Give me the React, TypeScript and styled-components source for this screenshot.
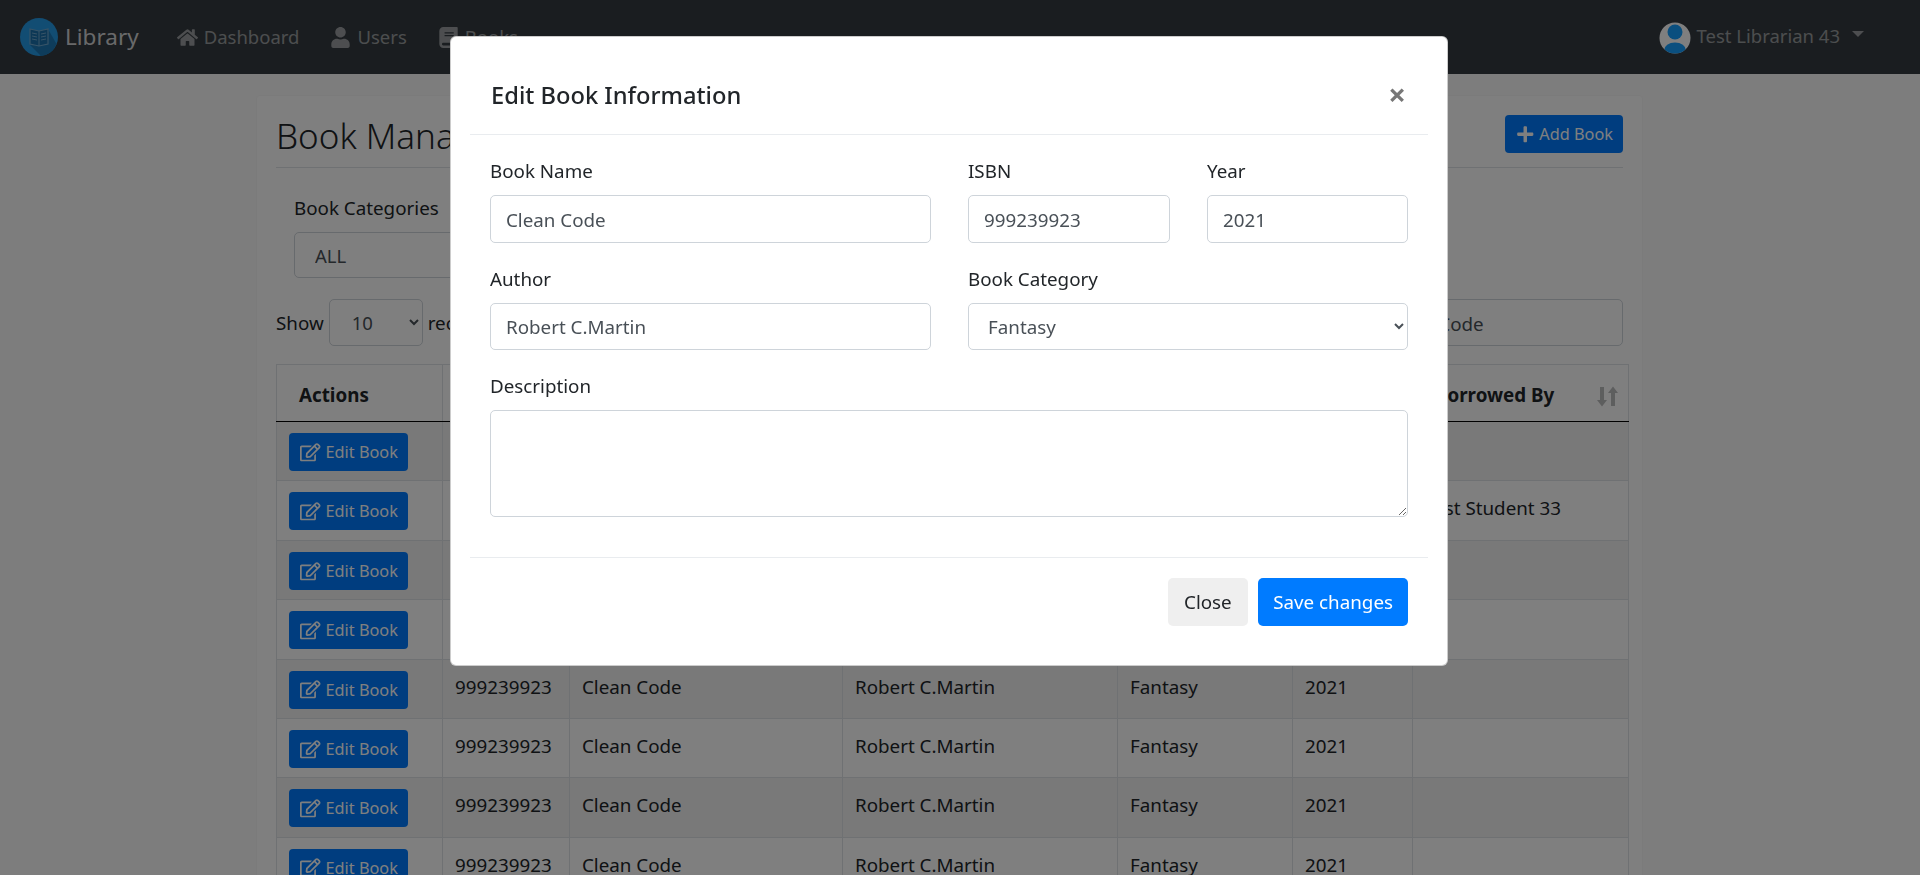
import { createGlobalStyle } from 'styled-components';
import styled from 'styled-components';
import { FaBook, FaHome, FaPlus, FaRegEdit, FaUser } from 'react-icons/fa';

const FONT = '"Noto Sans", "Open Sans", sans-serif';

const GlobalStyle = createGlobalStyle`
  html, body {
    margin: 0;
    height: 875px;
    overflow: hidden;
    background: #fafafa;
  }

  body {
    font-family: ${FONT};
    font-size: 18.8px;
    line-height: 30px;
    color: #212529;
  }

  * {
    box-sizing: border-box;
  }
`;

const Navbar = styled.nav`
  display: flex;
  align-items: center;
  height: 74px;
  padding: 0 56px 0 20px;
  background: #343a40;
  color: rgba(255, 255, 255, 0.5);
  font-size: 18.5px;
`;

const Brand = styled.a`
  display: flex;
  align-items: center;
  gap: 7px;
  margin-right: 38px;
  font-size: 22.5px;
  color: rgba(255, 255, 255, 0.8);
`;

const NavLink = styled.a`
  display: flex;
  align-items: center;
  gap: 6px;
  margin-right: 31px;

  svg {
    font-size: 21px;
  }
`;

const UserMenu = styled.div`
  display: flex;
  align-items: center;
  gap: 6px;
  margin-left: auto;
  margin-top: -2px;

  svg {
    margin-top: 3px;
  }
`;

const Caret = styled.span`
  margin-left: 6px;
  margin-top: -4px;
  border-top: 6px solid currentColor;
  border-left: 6px solid transparent;
  border-right: 6px solid transparent;
`;

const Card = styled.main`
  width: 1387px;
  margin: 21px 0 0 256px;
  padding: 0 19px;
  background: #fff;
  border: 1px solid rgba(0, 0, 0, 0.03);
  border-radius: 5px;
`;

const TitleRow = styled.header`
  display: flex;
  align-items: center;
  justify-content: space-between;
  height: 72px;
  padding-top: 5px;
  border-bottom: 1px solid #dee2e6;
`;

const PageTitle = styled.h2`
  margin: 3px 0 0;
  font-size: 35px;
  font-weight: 300;
  line-height: 48px;
`;

const SmallButton = styled.button`
  display: inline-flex;
  align-items: center;
  gap: 5px;
  height: 38px;
  padding: 0 10px 0 11px;
  border: none;
  border-radius: 4px;
  background: #007bff;
  color: #fff;
  font-family: ${FONT};
  font-size: 16.3px;
  white-space: nowrap;
  vertical-align: top;
`;

const PlusIcon = styled(FaPlus)`
  font-size: 18.5px;
`;

const EditIcon = styled(FaRegEdit)`
  font-size: 20.5px;
`;

const Filters = styled.section`
  padding: 24px 18px 0;
`;

const Label = styled.label`
  display: block;
  padding-top: 1px;
  margin-bottom: 9px;
`;

const FilterSelect = styled.select`
  display: block;
  width: 520px;
  height: 46px;
  padding: 0 16px;
  border: 1px solid #ced4da;
  border-radius: 5px;
  background: #fff;
  color: #495057;
  font-family: ${FONT};
  font-size: 18.5px;
`;

const TableControls = styled.div`
  display: flex;
  align-items: center;
  justify-content: space-between;
  margin-top: 21px;
`;

const LengthControl = styled.div`
  display: flex;
  align-items: center;
  gap: 5px;
`;

const LengthSelect = styled(FilterSelect)`
  width: 94px;
  height: 47px;
  padding: 0 18px;
`;

const SearchInput = styled.input`
  width: 256px;
  height: 47px;
  padding: 2px 16px 0;
  border: 1px solid #ced4da;
  border-radius: 5px;
  color: #495057;
  font-family: ${FONT};
  font-size: 18.8px;
`;

const Table = styled.table`
  width: 1352px;
  margin-top: 18px;
  border-collapse: collapse;
  table-layout: fixed;
`;

const HeadCell = styled.th`
  position: relative;
  height: 57px;
  padding: 4px 22px 0;
  border: 1px solid #dee2e6;
  border-bottom: 1px solid #000;
  text-align: left;
  font-size: 18.8px;
  font-weight: 700;
  white-space: nowrap;
`;

const SortArrows = styled.span`
  position: absolute;
  right: 10px;
  top: 21px;
  display: flex;
  opacity: 0.3;

  svg {
    display: block;
    width: 21px;
    height: 21px;
  }
`;

const Row = styled.tr<{ $striped: boolean }>`
  height: 59.4px;
  background: ${(props) => (props.$striped ? '#f2f2f2' : '#fff')};
`;

const Cell = styled.td`
  padding: 11px 12px 9px;
  border: 1px solid #dee2e6;
  vertical-align: top;
  white-space: nowrap;
`;

const TextCell = styled(Cell)`
  padding: 12px 12px 0;
`;

const Backdrop = styled.div`
  position: fixed;
  inset: 0;
  background: rgba(0, 0, 0, 0.5);
`;

const Modal = styled.div`
  position: fixed;
  top: 36px;
  left: 450px;
  width: 998px;
  padding: 19px;
  background: #fff;
  border: 1px solid rgba(0, 0, 0, 0.2);
  border-radius: 6px;
`;

const ModalHeader = styled.div`
  display: flex;
  align-items: flex-start;
  justify-content: space-between;
  height: 79px;
  padding: 20px 20px 20px 21px;
  border-bottom: 1px solid #e9ecef;
`;

const ModalTitle = styled.h5`
  margin: 0;
  font-size: 23.7px;
  font-weight: 500;
  line-height: 38px;
`;

const CloseIcon = styled.span`
  margin: -1px 2px 0 0;
  color: #777;
  font-size: 31px;
  font-weight: 700;
  line-height: 38px;
`;

const ModalBody = styled.div`
  display: grid;
  grid-template-columns: 441px 202px 201px;
  column-gap: 37px;
  row-gap: 20px;
  padding: 20px;
  border-bottom: 1px solid #e9ecef;
`;

const Field = styled.div<{ $span?: number }>`
  grid-column: span ${(props) => props.$span ?? 1};
`;

const TextInput = styled.input`
  display: block;
  width: 100%;
  height: 47.5px;
  padding: 2px 15px 0;
  border: 1px solid #ced4da;
  border-radius: 5px;
  background: #fff;
  color: #495057;
  font-family: ${FONT};
  font-size: 18.8px;
`;

const ModalSelect = styled.select`
  display: block;
  width: 100%;
  height: 47.5px;
  padding: 2px 15px 0;
  border: 1px solid #ced4da;
  border-radius: 5px;
  background: #fff;
  color: #495057;
  font-family: ${FONT};
  font-size: 18.8px;
`;

const TextArea = styled.textarea`
  display: block;
  width: 100%;
  height: 107px;
  margin-bottom: 20px;
  border: 1px solid #ced4da;
  border-radius: 5px;
  background: #fff;
`;

const ModalFooter = styled.div`
  display: flex;
  justify-content: flex-end;
  gap: 10px;
  padding: 20px;
`;

const FooterButton = styled.button<{ $primary?: boolean }>`
  height: 47.5px;
  padding: 0 ${(props) => (props.$primary ? '15px' : '16.5px')};
  border: none;
  border-radius: 5px;
  background: ${(props) => (props.$primary ? '#007bff' : '#efefef')};
  color: ${(props) => (props.$primary ? '#fff' : '#212529')};
  font-family: ${FONT};
  font-size: 18.8px;
`;

const columns = [
  { title: 'Actions', width: 166, sortable: false },
  { title: 'ISBN', width: 127, sortable: true },
  { title: 'Book Name', width: 273, sortable: true },
  { title: 'Author', width: 275, sortable: true },
  { title: 'Category', width: 175, sortable: true },
  { title: 'Year', width: 120, sortable: true },
  { title: 'Borrowed By', width: 216, sortable: true },
];

const books = Array.from({ length: 8 }, (_, index) => ({
  id: index,
  borrowedBy: index === 1 ? 'Test Student 33' : '',
}));

const LogoIcon = () => (
  <svg width="38" height="38" viewBox="0 0 38 38">
    <circle cx="19" cy="19" r="19" fill="#259ae6" />
    <path d="M28 11 L36.500 26 A19 19 0 0 1 21 38 L10 27 Z" fill="#1c78b6" />
    <path d="M10 11 L19 13 L28 11 V26 L19 28 L10 26 Z" fill="#1a70ac" stroke="#6fa8cf" strokeWidth="1.200" />
    <path d="M19 13 V28 M12 15 L17 16 M12 18 L17 19 M12 21 L17 22 M21 16 L26 15 M21 19 L26 18 M21 22 L26 21" stroke="#6fa8cf" strokeWidth="1" />
  </svg>
);

const AvatarIcon = () => (
  <svg width="32" height="32" viewBox="0 0 32 32">
    <defs>
      <clipPath id="avatar-clip">
        <circle cx="16" cy="16" r="15.500" />
      </clipPath>
    </defs>
    <circle cx="16" cy="16" r="15.500" fill="#fff" />
    <g clipPath="url(#avatar-clip)" fill="#149eff">
      <circle cx="16" cy="10" r="7.500" />
      <ellipse cx="16" cy="28.500" rx="11" ry="8" />
    </g>
  </svg>
);

const SortIcon = () => (
  <svg viewBox="0 0 21 21" fill="currentColor">
    <path d="M3 1h4v13h3l-5 6.500-5-6.500h3z" />
    <path d="M14 20h4V7h3l-5-6.500-5 6.500h3z" />
  </svg>
);

export default function App() {
  return (
    <>
      <GlobalStyle />
      <Navbar>
        <Brand>
          <LogoIcon />
          Library
        </Brand>
        <NavLink>
          <FaHome />
          Dashboard
        </NavLink>
        <NavLink>
          <FaUser />
          Users
        </NavLink>
        <NavLink>
          <FaBook />
          Books
        </NavLink>
        <UserMenu>
          <AvatarIcon />
          Test Librarian 43
          <Caret />
        </UserMenu>
      </Navbar>
      <Card>
        <TitleRow>
          <PageTitle>Book Management</PageTitle>
          <SmallButton>
            <PlusIcon />
            Add Book
          </SmallButton>
        </TitleRow>
        <Filters>
          <Label>Book Categories</Label>
          <FilterSelect defaultValue="ALL">
            <option>ALL</option>
          </FilterSelect>
        </Filters>
        <TableControls>
          <LengthControl>
            Show
            <LengthSelect defaultValue="10">
              <option>10</option>
            </LengthSelect>
            records
          </LengthControl>
          <SearchInput readOnly value="Clean Code" />
        </TableControls>
        <Table>
          <colgroup>
            {columns.map((column) => (
              <col key={column.title} width={column.width} />
            ))}
          </colgroup>
          <thead>
            <tr>
              {columns.map((column) => (
                <HeadCell key={column.title}>
                  {column.title}
                  {column.sortable && (
                    <SortArrows>
                      <SortIcon />
                    </SortArrows>
                  )}
                </HeadCell>
              ))}
            </tr>
          </thead>
          <tbody>
            {books.map((book) => (
              <Row key={book.id} $striped={book.id % 2 === 0}>
                <Cell>
                  <SmallButton>
                    <EditIcon />
                    Edit Book
                  </SmallButton>
                </Cell>
                <TextCell>999239923</TextCell>
                <TextCell>Clean Code</TextCell>
                <TextCell>Robert C.Martin</TextCell>
                <TextCell>Fantasy</TextCell>
                <TextCell>2021</TextCell>
                <TextCell>{book.borrowedBy}</TextCell>
              </Row>
            ))}
          </tbody>
        </Table>
      </Card>
      <Backdrop />
      <Modal>
        <ModalHeader>
          <ModalTitle>Edit Book Information</ModalTitle>
          <CloseIcon>×</CloseIcon>
        </ModalHeader>
        <ModalBody>
          <Field>
            <Label>Book Name</Label>
            <TextInput readOnly value="Clean Code" />
          </Field>
          <Field>
            <Label>ISBN</Label>
            <TextInput readOnly value="999239923" />
          </Field>
          <Field>
            <Label>Year</Label>
            <TextInput readOnly value="2021" />
          </Field>
          <Field>
            <Label>Author</Label>
            <TextInput readOnly value="Robert C.Martin" />
          </Field>
          <Field $span={2}>
            <Label>Book Category</Label>
            <ModalSelect defaultValue="Fantasy">
              <option>Fantasy</option>
            </ModalSelect>
          </Field>
          <Field $span={3}>
            <Label>Description</Label>
            <TextArea readOnly />
          </Field>
        </ModalBody>
        <ModalFooter>
          <FooterButton>Close</FooterButton>
          <FooterButton $primary>Save changes</FooterButton>
        </ModalFooter>
      </Modal>
    </>
  );
}
